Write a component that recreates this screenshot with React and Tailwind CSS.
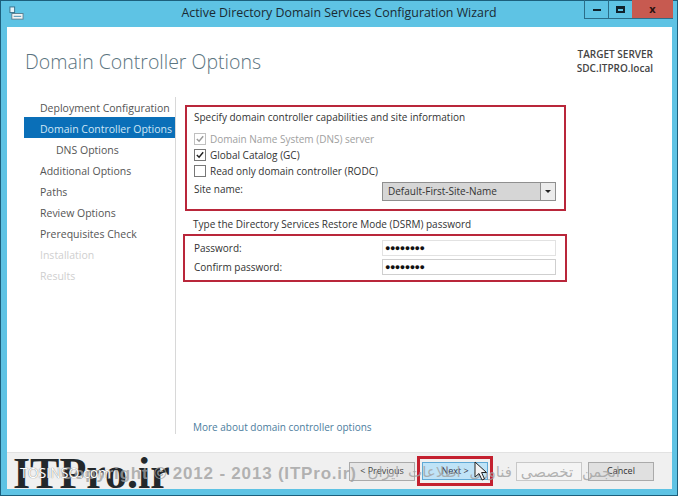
import React from 'react';

const steps = [
  { label: 'Deployment Configuration' },
  { label: 'Domain Controller Options', active: true },
  { label: 'DNS Options', sub: true },
  { label: 'Additional Options' },
  { label: 'Paths' },
  { label: 'Review Options' },
  { label: 'Prerequisites Check' },
  { label: 'Installation', disabled: true },
  { label: 'Results', disabled: true },
];

const CheckRow = ({ checked, disabled, children }) => (
  <div className={`flex items-center h-[16px] gap-[4px] ${disabled ? 'text-[#a0a0a0]' : 'text-[#333]'}`}>
    <span className={`flex items-center justify-center w-[12px] h-[12px] border bg-white ${disabled ? 'border-[#c0c0c0]' : 'border-[#777]'}`}>
      {checked && (
        <svg viewBox="0 0 11 11" className="w-[10px] h-[10px]">
          <path d="M2 5.5 L4.5 8 L9 2.5" fill="none" stroke={disabled ? '#999' : '#222'} strokeWidth="1.6" />
        </svg>
      )}
    </span>
    <span>{children}</span>
  </div>
);

const WizardButton = ({ children, className }) => (
  <div className={`w-[66px] flex-none border flex items-center justify-center text-[9px] ${className}`}>{children}</div>
);

export default function App() {
  return (
    <div className="relative w-[678px] h-[496px] overflow-hidden flex flex-col bg-[#5ec3e4] shadow-[inset_0_0_0_1px_#1c5f7c] font-['Open_Sans',sans-serif] text-[10px] text-[#333]">
      {/* title bar */}
      <div className="relative h-[27px] flex-none flex items-center">
        <svg viewBox="0 0 16 16" className="absolute left-[9px] top-[6px] w-[15px] h-[15px]">
          <rect x="1" y="1" width="5" height="6" fill="#e8f4f8" stroke="#35708a" />
          <rect x="3" y="8" width="12" height="6" fill="#f4f4f4" stroke="#5a7f90" />
          <path d="M5 11h8" stroke="#3a8ab0" />
        </svg>
        <div className="w-full text-center text-[12.4px] text-[#1a2a33]">Active Directory Domain Services Configuration Wizard</div>
        <div className="absolute right-[5px] top-0 flex h-[19px] border-b border-[#2b6d88]">
          <div className="w-[25px] border-x border-[#2b6d88] flex items-center justify-center">
            <span className="w-[8px] h-[2px] mt-[2px] bg-[#10222c]" />
          </div>
          <div className="w-[23px] flex items-center justify-center">
            <span className="w-[9px] h-[7px] border-2 border-t-[3px] border-[#10222c]" />
          </div>
          <div className="w-[41px] bg-[#c75a50] flex items-center justify-center text-[#2a1210] text-[11px] font-bold">x</div>
        </div>
      </div>

      {/* client */}
      <div className="flex-1 ml-[7px] mr-[6px] mb-[7px] flex flex-col bg-white">
        <div className="flex-1 flex flex-col">
          <div className="flex justify-between pl-[18px] pr-[7px] h-[68px] flex-none">
            <div className="text-[19.5px] font-light text-[#5b7480] pt-[20px] leading-[30px]">Domain Controller Options</div>
            <div className="text-right text-[10px] font-semibold leading-[14px] text-[#444] pt-[20px] pr-[12px]">
              <div>TARGET SERVER</div>
              <div>SDC.ITPRO.local</div>
            </div>
          </div>
          <div className="flex flex-1">
            {/* steps */}
            <div className="w-[168px] flex-none pl-[17px] pt-[1px]">
              {steps.map((s) => (
                <div
                  key={s.label}
                  className={`h-[21px] pt-[4px] flex items-center whitespace-nowrap text-[10.5px] ${s.sub ? 'pl-[32px]' : 'pl-[16px]'} ${
                    s.active ? 'bg-[#0a6fb8] text-[#cfe6f5]' : s.disabled ? 'text-[#cfcfcf]' : 'text-[#555]'
                  }`}
                >
                  {s.label}
                </div>
              ))}
            </div>
            {/* form */}
            <div className="flex-1 border-l border-[#d8d8d8] pl-[9px] flex flex-col mt-[2px] mb-[18px]">
              <div className="w-[381px] h-[106px] flex-none border-2 border-[#b9263a] pl-[7px] pr-[8px] pt-[2px] mt-[8px]">
                <div className="h-[16px] leading-[16px]">Specify domain controller capabilities and site information</div>
                <div className="mt-[6px]">
                  <CheckRow checked disabled>Domain Name System (DNS) server</CheckRow>
                  <CheckRow checked>Global Catalog (GC)</CheckRow>
                  <CheckRow>Read only domain controller (RODC)</CheckRow>
                </div>
                <div className="flex justify-between mt-[3px]">
                  <span className="leading-[14px]">Site name:</span>
                  <div className="w-[174px] h-[19px] border border-[#8f8f8f] bg-[#d6d6d6] flex items-center justify-between pl-[5px]">
                    <span>Default-First-Site-Name</span>
                    <span className="w-[15px] h-full border-l border-[#8f8f8f] bg-[#ececec] flex items-center justify-center">
                      <span className="border-x-[3px] border-x-transparent border-t-[3px] border-t-[#222]" />
                    </span>
                  </div>
                </div>
              </div>
              <div className="h-[14px] leading-[14px] pl-[8px] mt-[6px]">Type the Directory Services Restore Mode (DSRM) password</div>
              <div className="w-[384px] h-[48px] flex-none -ml-[2px] mt-[3px] border-2 border-[#b9263a] pl-[9px] pr-[9px] pt-[4px] flex flex-col gap-[3px]">
                <div className="flex justify-between items-center">
                  <span>Password:</span>
                  <div className="w-[174px] h-[16px] border border-[#e2e2e2] text-[9px] tracking-[-0.5px] flex items-center pl-[2px] text-[#111]">●●●●●●●●</div>
                </div>
                <div className="flex justify-between items-center">
                  <span>Confirm password:</span>
                  <div className="w-[174px] h-[16px] border border-[#cfcfcf] text-[9px] tracking-[-0.5px] flex items-center pl-[2px] text-[#111]">●●●●●●●●</div>
                </div>
              </div>
              <div className="mt-auto pl-[8px] text-[#4c7d9e] leading-[14px]">More about domain controller options</div>
            </div>
          </div>
        </div>
        {/* footer */}
        <div className="relative h-[37px] flex-none bg-[#f0f0f0] border-t border-[#e2e2e2] flex items-center pl-[342px]">
          <WizardButton className="h-[19px] border-[#aaa] bg-[#e6e6e6] text-[#444]">&lt; Previous</WizardButton>
          <div className="ml-[2px] w-[76px] h-[30px] flex-none border-[3px] border-[#c4202f] flex items-center justify-center">
            <WizardButton className="h-[18px] border-[#5fa9d6] bg-[#bfe3f7] text-[#334]">Next &gt;</WizardButton>
          </div>
          <WizardButton className="h-[19px] ml-[23px] border-[#c8c8c8] bg-[#f4f4f4] text-transparent">Install</WizardButton>
          <WizardButton className="h-[19px] ml-[6px] border-[#aaa] bg-[#e0e0e0] text-[#333]">Cancel</WizardButton>
        </div>
      </div>

      {/* watermarks over the footer */}
      <div className="absolute left-[13px] top-[450px] font-['Liberation_Serif',serif] font-bold text-[44px] leading-[48px] text-[#23282b] whitespace-nowrap">ITPro.ir</div>
      <div className="absolute left-[61px] top-[462px] font-['Liberation_Sans',sans-serif] font-bold text-[17px] leading-[24px] tracking-[0.8px] text-[#a0a0a0]/80 whitespace-nowrap">Copyright © 2012 - 2013 (ITPro.ir)</div>
      <div className="absolute left-[20px] top-[464px] text-[14px] leading-[18px] text-white [text-shadow:0_0_1px_#555] whitespace-nowrap">TOSINSO.com</div>
      <div dir="rtl" className="absolute left-[349px] top-[460px] w-[271px] font-['DejaVu_Sans',sans-serif] text-[15px] leading-[24px] [word-spacing:4px] text-[#a0a0a0]/80 whitespace-nowrap">انجمن تخصصی فناوری اطلاعات ایران</div>

      {/* mouse pointer */}
      <svg viewBox="0 0 14 20" className="absolute left-[474px] top-[461px] w-[14px] h-[20px]">
        <path d="M1 1 L1 16 L5 12.5 L8 19 L10.5 18 L7.6 11.5 L12.5 11.5 Z" fill="#f4f4f4" stroke="#222" strokeWidth="1" />
      </svg>
    </div>
  );
}
